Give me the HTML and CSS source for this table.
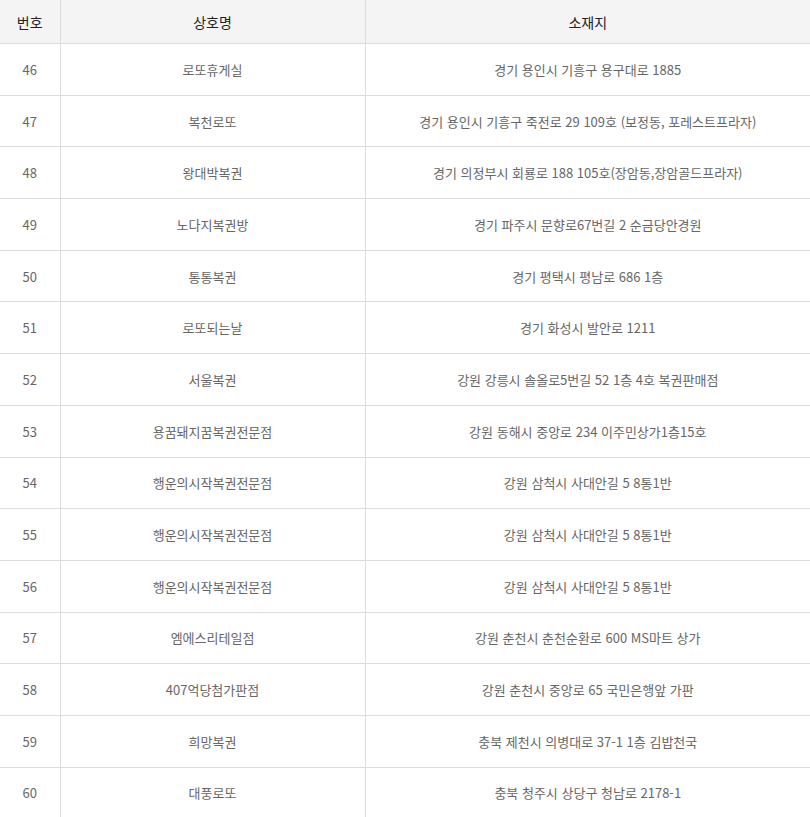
FILE: index.html
```html
<!DOCTYPE html>
<html lang="ko">
<head>
<meta charset="utf-8">
<link rel="stylesheet" href="styles.css">
</head>
<body>
<table class="shops">
  <colgroup>
    <col class="c-no">
    <col class="c-name">
    <col class="c-addr">
  </colgroup>
  <thead>
    <tr><th>번호</th><th>상호명</th><th>소재지</th></tr>
  </thead>
  <tbody>
    <tr><td>46</td><td>로또휴게실</td><td>경기 용인시 기흥구 용구대로 1885</td></tr>
    <tr><td>47</td><td>복천로또</td><td>경기 용인시 기흥구 죽전로 29 109호 (보정동, 포레스트프라자)</td></tr>
    <tr><td>48</td><td>왕대박복권</td><td>경기 의정부시 회룡로 188 105호(장암동,장암골드프라자)</td></tr>
    <tr><td>49</td><td>노다지복권방</td><td>경기 파주시 문향로67번길 2 순금당안경원</td></tr>
    <tr><td>50</td><td>통통복권</td><td>경기 평택시 평남로 686 1층</td></tr>
    <tr><td>51</td><td>로또되는날</td><td>경기 화성시 발안로 1211</td></tr>
    <tr><td>52</td><td>서울복권</td><td>강원 강릉시 솔올로5번길 52 1층 4호 복권판매점</td></tr>
    <tr><td>53</td><td>용꿈돼지꿈복권전문점</td><td>강원 동해시 중앙로 234 이주민상가1층15호</td></tr>
    <tr><td>54</td><td>행운의시작복권전문점</td><td>강원 삼척시 사대안길 5 8통1반</td></tr>
    <tr><td>55</td><td>행운의시작복권전문점</td><td>강원 삼척시 사대안길 5 8통1반</td></tr>
    <tr><td>56</td><td>행운의시작복권전문점</td><td>강원 삼척시 사대안길 5 8통1반</td></tr>
    <tr><td>57</td><td>엠에스리테일점</td><td>강원 춘천시 춘천순환로 600 MS마트 상가</td></tr>
    <tr><td>58</td><td>407억당첨가판점</td><td>강원 춘천시 중앙로 65 국민은행앞 가판</td></tr>
    <tr><td>59</td><td>희망복권</td><td>충북 제천시 의병대로 37-1 1층 김밥천국</td></tr>
    <tr><td>60</td><td>대풍로또</td><td>충북 청주시 상당구 청남로 2178-1</td></tr>
  </tbody>
</table>
</body>
</html>
```
FILE: styles.css
```css
html, body {
  margin: 0;
  padding: 0;
  background: #fff;
}
body {
  font-family: "Noto Sans CJK KR", "Noto Sans", sans-serif;
}
.shops {
  width: 810px;
  border-collapse: collapse;
  table-layout: fixed;
}
.c-no { width: 60px; }
.c-name { width: 305px; }
.c-addr { width: 445px; }
.shops th {
  height: 43px;
  padding: 0;
  background: #f4f4f4;
  color: #222;
  font-size: 14px;
  font-weight: normal;
  text-align: center;
  border-bottom: 1px solid #dcdcdc;
  border-left: 1px solid #dcdcdc;
}
.shops td {
  height: 50.7px;
  padding: 0;
  color: #666;
  font-size: 13px;
  text-align: center;
  border-bottom: 1px solid #dcdcdc;
  border-left: 1px solid #dcdcdc;
}
.shops th:first-child,
.shops td:first-child {
  border-left: none;
}
```
